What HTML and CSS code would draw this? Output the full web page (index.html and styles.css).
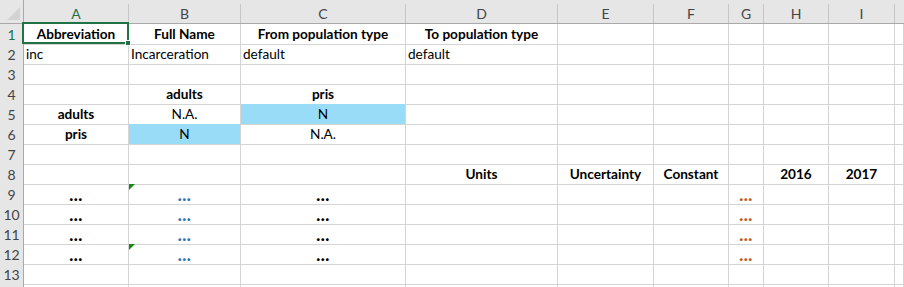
FILE: index.html
```html
<!DOCTYPE html>
<html>
<head>
<meta charset="utf-8">
<link rel="stylesheet" href="styles.css">
</head>
<body>
<div class="sheet">
  <div class="row hdr">
    <div class="corner"><svg class="corner-tri" width="13" height="13" viewBox="0 0 13 13"><polygon points="13,0 13,13 0,13" fill="#d3d3d3"/></svg></div>
    <div class="ch sel-h">A</div><div class="ch">B</div><div class="ch">C</div><div class="ch">D</div><div class="ch">E</div><div class="ch">F</div><div class="ch">G</div><div class="ch">H</div><div class="ch">I</div><div class="ch last"></div>
  </div>

  <div class="row">
    <div class="rh sel-h">1</div>
    <div class="c b ctr a1">Abbreviation<span class="selbox"><span class="handle"></span></span></div>
    <div class="c b ctr">Full Name</div><div class="c b ctr">From population type</div><div class="c b ctr">To population type</div>
    <div class="c"></div><div class="c"></div><div class="c"></div><div class="c"></div><div class="c"></div><div class="c"></div>
  </div>

  <div class="row">
    <div class="rh">2</div>
    <div class="c l">inc</div><div class="c l">Incarceration</div><div class="c l">default</div><div class="c l">default</div>
    <div class="c"></div><div class="c"></div><div class="c"></div><div class="c"></div><div class="c"></div><div class="c"></div>
  </div>

  <div class="row">
    <div class="rh">3</div>
    <div class="c"></div><div class="c"></div><div class="c"></div><div class="c"></div><div class="c"></div><div class="c"></div><div class="c"></div><div class="c"></div><div class="c"></div><div class="c"></div>
  </div>

  <div class="row">
    <div class="rh">4</div>
    <div class="c"></div><div class="c b ctr">adults</div><div class="c b ctr">pris</div>
    <div class="c"></div><div class="c"></div><div class="c"></div><div class="c"></div><div class="c"></div><div class="c"></div><div class="c"></div>
  </div>

  <div class="row">
    <div class="rh">5</div>
    <div class="c b ctr">adults</div><div class="c ctr">N.A.</div><div class="c ctr fill">N</div>
    <div class="c"></div><div class="c"></div><div class="c"></div><div class="c"></div><div class="c"></div><div class="c"></div><div class="c"></div>
  </div>

  <div class="row">
    <div class="rh">6</div>
    <div class="c b ctr">pris</div><div class="c ctr fill">N</div><div class="c ctr">N.A.</div>
    <div class="c"></div><div class="c"></div><div class="c"></div><div class="c"></div><div class="c"></div><div class="c"></div><div class="c"></div>
  </div>

  <div class="row">
    <div class="rh">7</div>
    <div class="c"></div><div class="c"></div><div class="c"></div><div class="c"></div><div class="c"></div><div class="c"></div><div class="c"></div><div class="c"></div><div class="c"></div><div class="c"></div>
  </div>

  <div class="row">
    <div class="rh">8</div>
    <div class="c"></div><div class="c"></div><div class="c"></div>
    <div class="c b ctr">Units</div><div class="c b ctr">Uncertainty</div><div class="c b ctr">Constant</div><div class="c"></div><div class="c b ctr">2016</div><div class="c b ctr">2017</div><div class="c"></div>
  </div>

  <div class="row">
    <div class="rh">9</div>
    <div class="c b ctr dots">...</div><div class="c b ctr dots blue tri">...</div><div class="c b ctr dots">...</div>
    <div class="c"></div><div class="c"></div><div class="c"></div><div class="c b ctr dots orange">...</div><div class="c"></div><div class="c"></div><div class="c"></div>
  </div>

  <div class="row">
    <div class="rh">10</div>
    <div class="c b ctr dots">...</div><div class="c b ctr dots blue">...</div><div class="c b ctr dots">...</div>
    <div class="c"></div><div class="c"></div><div class="c"></div><div class="c b ctr dots orange">...</div><div class="c"></div><div class="c"></div><div class="c"></div>
  </div>

  <div class="row">
    <div class="rh">11</div>
    <div class="c b ctr dots">...</div><div class="c b ctr dots blue">...</div><div class="c b ctr dots">...</div>
    <div class="c"></div><div class="c"></div><div class="c"></div><div class="c b ctr dots orange">...</div><div class="c"></div><div class="c"></div><div class="c"></div>
  </div>

  <div class="row">
    <div class="rh">12</div>
    <div class="c b ctr dots">...</div><div class="c b ctr dots blue tri">...</div><div class="c b ctr dots">...</div>
    <div class="c"></div><div class="c"></div><div class="c"></div><div class="c b ctr dots orange">...</div><div class="c"></div><div class="c"></div><div class="c"></div>
  </div>

  <div class="row">
    <div class="rh">13</div>
    <div class="c"></div><div class="c"></div><div class="c"></div><div class="c"></div><div class="c"></div><div class="c"></div><div class="c"></div><div class="c"></div><div class="c"></div><div class="c"></div>
  </div>

  <div class="row">
    <div class="rh"></div>
    <div class="c"></div><div class="c"></div><div class="c"></div><div class="c"></div><div class="c"></div><div class="c"></div><div class="c"></div><div class="c"></div><div class="c"></div><div class="c"></div>
  </div>
</div>
</body>
</html>
```

FILE: styles.css
```css
* { box-sizing: border-box; }
html, body {
  margin: 0;
  padding: 0;
  background: #ffffff;
  overflow: hidden;
  width: 904px;
  height: 287px;
}
.sheet {
  display: flex;
  flex-direction: column;
  font-family: Lato, "Open Sans", sans-serif;
  font-size: 13.6px;
  color: #000;
}
.row {
  display: grid;
  grid-template-columns: 24px 105px 112px 165px 152px 96px 75px 35px 65px 66px 1fr;
  height: 20px;
  flex: none;
}
.hdr {
  height: 24px;
  background: #e6e6e6;
  border-bottom: 1px solid #a9a9a9;
}
.corner {
  position: relative;
  border-right: 1px solid #a9a9a9;
}
.corner-tri {
  position: absolute;
  right: 3px;
  bottom: 3px;
}
.ch {
  margin-top: 4px;
  border-right: 1px solid #c6c6c6;
  display: flex;
  align-items: center;
  justify-content: center;
  color: #444;
  font-size: 14px;
  line-height: 19px;
}
.ch.last { border-right: none; }
.rh {
  background: #e6e6e6;
  border-right: 1px solid #a9a9a9;
  border-bottom: 1px solid #cfcfcf;
  display: flex;
  align-items: center;
  justify-content: center;
  color: #444;
  font-size: 14px;
  line-height: 19px;
  padding-top: 1px;
}
.sel-h { color: #217346; }
.c {
  border-right: 1px solid #d4d4d4;
  border-bottom: 1px solid #d4d4d4;
  display: flex;
  align-items: center;
  white-space: nowrap;
  line-height: 19px;
  padding: 1px 2px 0 2px;
  position: relative;
}
.b { font-weight: 700; }
.ctr { justify-content: center; }
.l { justify-content: flex-start; padding-left: 2px; }
.fill { background: #99dcf7; }
.dots { font-size: 17px; font-weight: 900; letter-spacing: 0.5px; }
.blue { color: #2e74b5; }
.orange { color: #c55a11; }
.a1 { z-index: 2; }
.selbox {
  position: absolute;
  left: -2px;
  top: -2px;
  width: 107px;
  height: 22px;
  border: 2px solid #217346;
  pointer-events: none;
}
.handle {
  position: absolute;
  right: -4px;
  bottom: -4px;
  width: 6px;
  height: 6px;
  background: #217346;
  border: 1px solid #ffffff;
}
.tri::before {
  content: "";
  position: absolute;
  left: 0;
  top: 0;
  width: 0;
  height: 0;
  border-top: 6px solid #158a15;
  border-right: 6px solid transparent;
}
```
